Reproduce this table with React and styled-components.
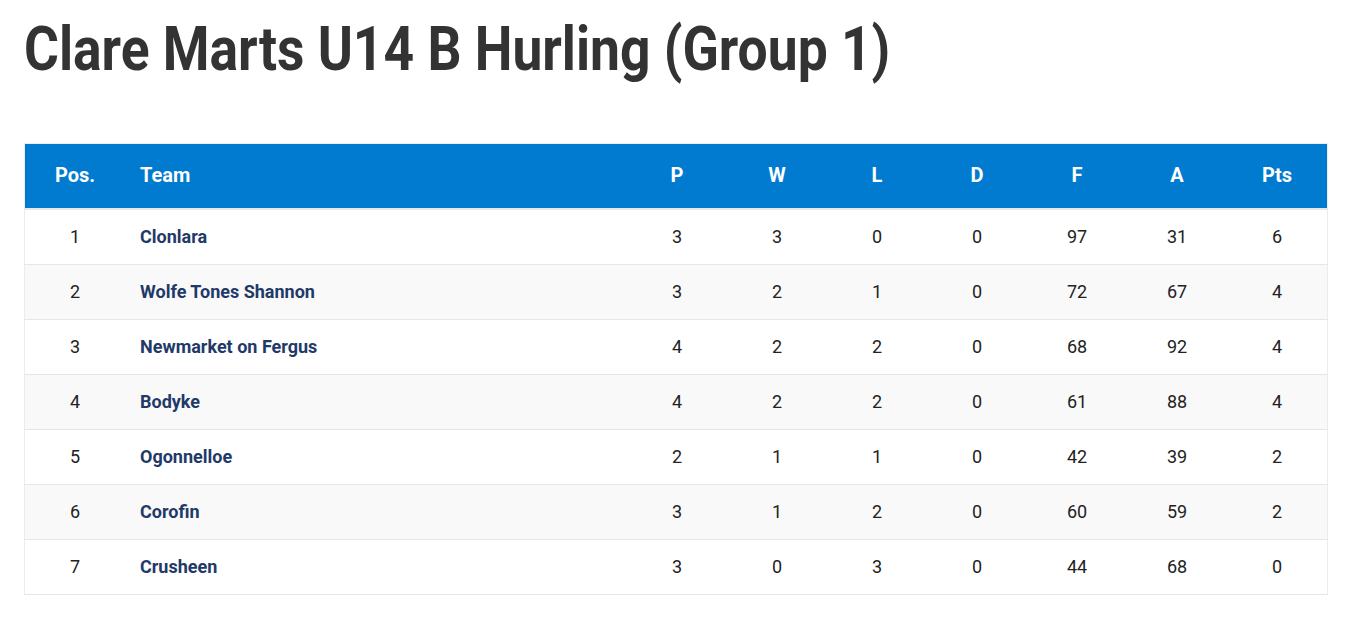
import React from "react";
import styled, { createGlobalStyle } from "styled-components";

const Global = createGlobalStyle`
  html, body { margin: 0; padding: 0; background: #fff; }
  body { font-family: Roboto, "Noto Sans", sans-serif; color: #222; }
`;

const Page = styled.div`
  padding: 0 23px 0 24px;
`;

const Title = styled.h1`
  margin: 0;
  height: 143px;
  box-sizing: border-box;
  padding-top: 13px;
  font-family: Roboto, "Noto Sans", sans-serif;
  font-weight: 700;
  font-size: 62px;
  line-height: 72px;
  color: #333;
`;

/* Roboto Condensed is not installed: narrow Roboto Bold to its width */
const TitleText = styled.span`
  display: inline-block;
  transform-origin: left center;
  transform: scaleX(0.861);
  white-space: nowrap;
`;

const Table = styled.table`
  width: 100%;
  border-collapse: collapse;
  border: 1px solid #ececec;
`;

const HeadRow = styled.tr`
  background: #007bcf;
  border-bottom: 2px solid #e8e8e8;
`;

const Th = styled.th`
  height: 61px;
  padding: 0 ${(p) => (p.$left ? "15px" : "0")} 3px;
  width: ${(p) => p.$w || "auto"};
  text-align: ${(p) => (p.$left ? "left" : "center")};
  color: #fff;
  font-size: 20px;
  font-weight: 700;
`;

const Row = styled.tr`
  background: ${(p) => (p.$alt ? "#f9f9f9" : "#fff")};
  border-bottom: 1px solid #e6e6e6;
`;

const Td = styled.td`
  height: 52px;
  padding: 0 ${(p) => (p.$left ? "15px" : "0")} 2px;
  text-align: ${(p) => (p.$left ? "left" : "center")};
  font-size: 18px;
  color: #222;
`;

const TeamName = styled.a`
  color: #1f3a68;
  font-weight: 700;
  text-decoration: none;
`;

const rows = [
  [1, "Clonlara", 3, 3, 0, 0, 97, 31, 6],
  [2, "Wolfe Tones Shannon", 3, 2, 1, 0, 72, 67, 4],
  [3, "Newmarket on Fergus", 4, 2, 2, 0, 68, 92, 4],
  [4, "Bodyke", 4, 2, 2, 0, 61, 88, 4],
  [5, "Ogonnelloe", 2, 1, 1, 0, 42, 39, 2],
  [6, "Corofin", 3, 1, 2, 0, 60, 59, 2],
  [7, "Crusheen", 3, 0, 3, 0, 44, 68, 0],
];

const cols = ["P", "W", "L", "D", "F", "A", "Pts"];

export default function App() {
  return (
    <>
      <Global />
      <Page>
        <Title>
          <TitleText>Clare Marts U14 B Hurling (Group 1)</TitleText>
        </Title>
        <Table>
          <thead>
            <HeadRow>
              <Th $w="100px">Pos.</Th>
              <Th $left>Team</Th>
              {cols.map((c) => (
                <Th key={c} $w="100px">{c}</Th>
              ))}
            </HeadRow>
          </thead>
          <tbody>
            {rows.map((r, i) => (
              <Row key={r[0]} $alt={i % 2 === 1}>
                <Td>{r[0]}</Td>
                <Td $left>
                  <TeamName href="#">{r[1]}</TeamName>
                </Td>
                {r.slice(2).map((v, j) => (
                  <Td key={j}>{v}</Td>
                ))}
              </Row>
            ))}
          </tbody>
        </Table>
      </Page>
    </>
  );
}
